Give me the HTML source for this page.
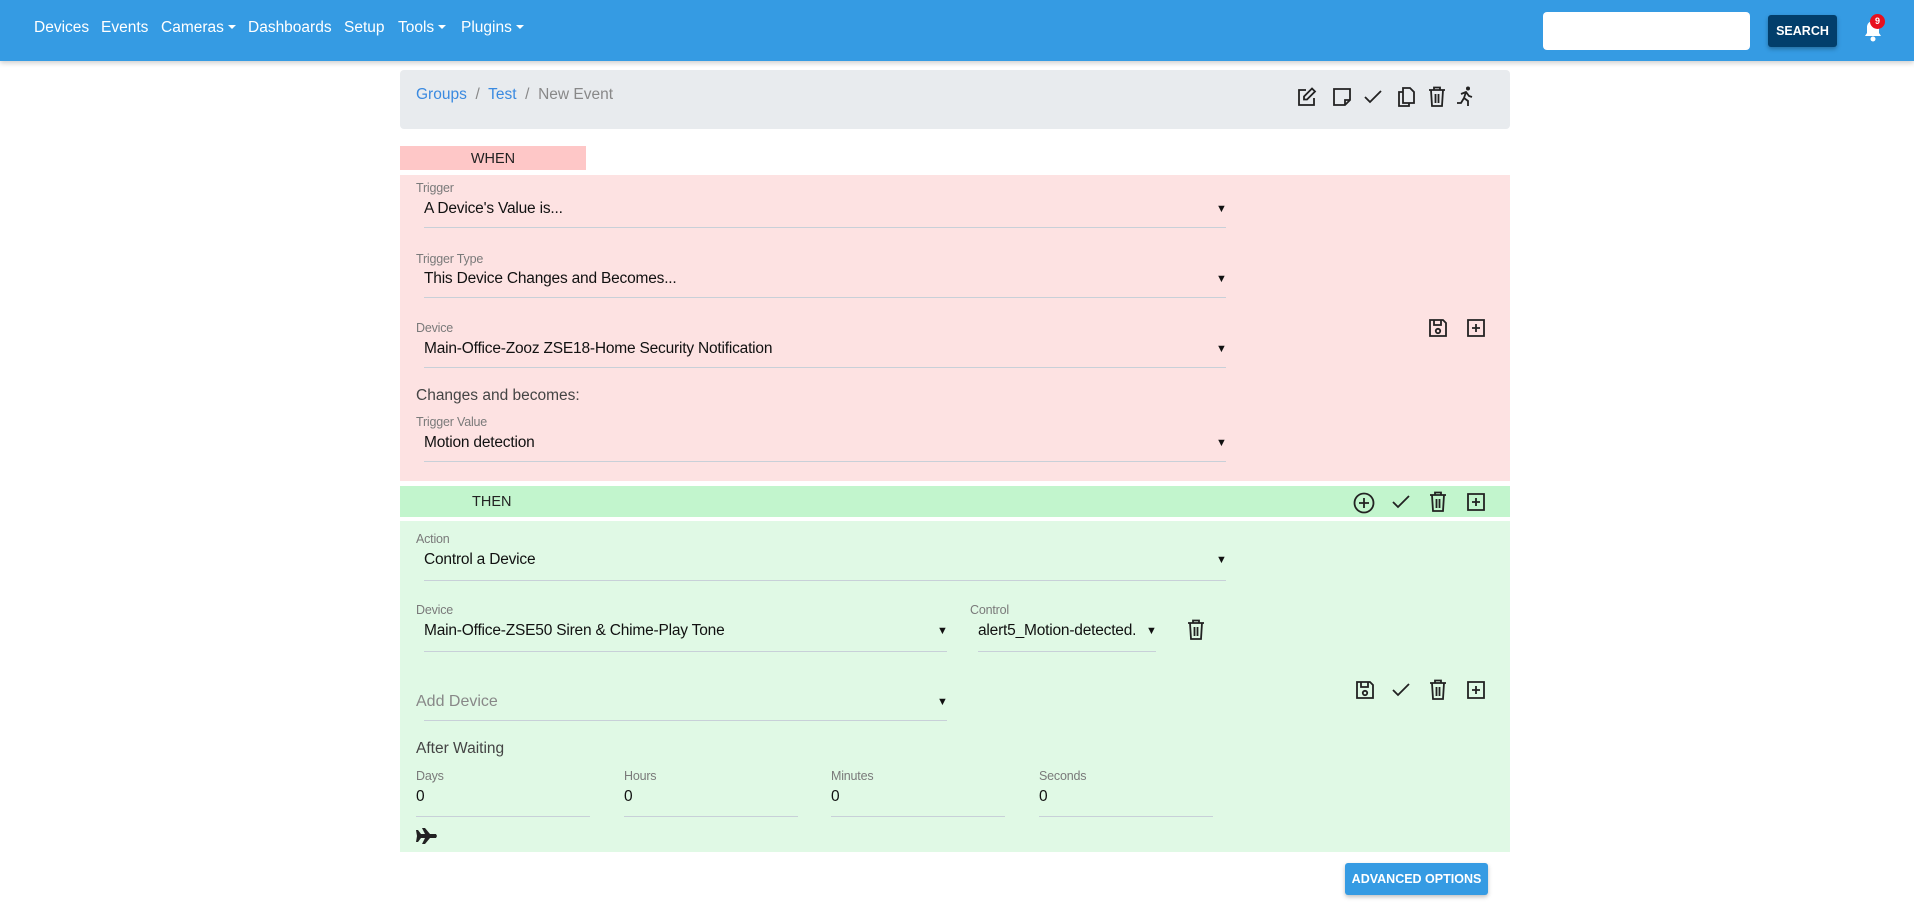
<!DOCTYPE html>
<html><head><meta charset="utf-8"><style>
*{box-sizing:border-box;margin:0;padding:0}
body{width:1914px;height:903px;overflow:hidden;background:#fff;font-family:"Liberation Sans",sans-serif;position:relative;color:#212529}
.a{position:absolute}
.nav{left:0;top:0;width:1914px;height:61px;background:#359be3;box-shadow:0 2px 5px rgba(0,0,0,.2)}
.ni{color:#fff;font-size:15.5px;top:19px}
.car{display:inline-block;border-left:4px solid transparent;border-right:4px solid transparent;border-top:4px solid #fff;vertical-align:3px;margin-left:4px}
.lbl{font-size:12.5px;color:#7a7a7a;letter-spacing:-.2px;margin-top:1px}
.val{font-size:15.5px;color:#111;letter-spacing:-.2px;margin-top:1px}
.ln{height:1px;background:#c8d0d8}
.arr{font-size:11px;color:#111}
svg{position:absolute;fill:none;stroke:#222;stroke-width:1.8}
</style></head><body>
<div class="a nav"></div>
<div class="a ni" style="left:34px">Devices</div>
<div class="a ni" style="left:101px">Events</div>
<div class="a ni" style="left:161px">Cameras<span class="car"></span></div>
<div class="a ni" style="left:248px">Dashboards</div>
<div class="a ni" style="left:344px">Setup</div>
<div class="a ni" style="left:398px">Tools<span class="car"></span></div>
<div class="a ni" style="left:461px">Plugins<span class="car"></span></div>
<div class="a" style="left:1543px;top:12px;width:207px;height:38px;background:#fff;border-radius:4px"></div>
<div class="a" style="left:1768px;top:15px;width:69px;height:32px;background:#023e6b;border-radius:3px;color:#fff;font-size:12.5px;font-weight:bold;text-align:center;line-height:32px;box-shadow:0 2px 4px rgba(0,0,0,.3)">SEARCH</div>
<svg style="left:1862px;top:17px" width="22" height="26" viewBox="0 0 22 26"><path d="M3 19h16l-2-3v-6a6 6 0 0 0-12 0v6z" fill="#fff" stroke="none"/><circle cx="11" cy="22" r="2.5" fill="#fff" stroke="none"/></svg>
<div class="a" style="left:1870px;top:14px;width:15px;height:15px;border-radius:50%;background:#e8101e;color:#fff;font-size:9px;font-weight:bold;text-align:center;line-height:15px">9</div>

<div class="a" style="left:400px;top:70px;width:1110px;height:59px;background:#e8ebee;border-radius:4px"></div>
<div class="a" style="left:416px;top:86px;font-size:15.5px;color:#888"><span style="color:#3a8ae0">Groups</span> &nbsp;/&nbsp; <span style="color:#3a8ae0">Test</span> &nbsp;/&nbsp; New Event</div>
<svg style="left:1297px;top:87px" width="20" height="20" viewBox="0 0 20 20"><path d="M9 3H2v15h15v-7"/><path d="M15 1.5l3 3-8 8H7v-3z"/></svg>
<svg style="left:1332px;top:87px" width="20" height="20" viewBox="0 0 20 20"><path d="M2 2h16v11l-5 5H2z"/><path d="M18 13h-5v5"/></svg>
<svg style="left:1363px;top:87px" width="20" height="20" viewBox="0 0 20 20"><path d="M2 10l5 5L18 4"/></svg>
<svg style="left:1396px;top:86px" width="20" height="22" viewBox="0 0 20 22"><path d="M7 2h7l4 4v11H7z"/><path d="M7 6H3v14h10v-3"/></svg>
<svg style="left:1427px;top:86px" width="20" height="22" viewBox="0 0 20 22"><path d="M2 4h16M7 4V1.5h6V4M4 4l1 16h10l1-16M8.5 8v9M11.5 8v9"/></svg>
<svg style="left:1456px;top:86px" width="20" height="22" viewBox="0 0 20 22"><circle cx="12" cy="2.5" r="2" fill="#222" stroke="none"/><path d="M5 8l5-2 3 4 3 1M10 6l-2 6 4 3v5M8 12l-3 5H1" /></svg>

<div class="a" style="left:400px;top:146px;width:186px;height:24px;background:#fec7c7;text-align:center;font-size:14.5px;line-height:26px;color:#222">WHEN</div>
<div class="a" style="left:400px;top:175px;width:1110px;height:306px;background:#fde2e2"></div>

<div class="a lbl" style="left:416px;top:180px">Trigger</div>
<div class="a val" style="left:424px;top:199px">A Device's Value is...</div>
<div class="a arr" style="left:1216px;top:203px">▼</div>
<div class="a ln" style="left:424px;top:227px;width:802px"></div>

<div class="a lbl" style="left:416px;top:251px">Trigger Type</div>
<div class="a val" style="left:424px;top:269px">This Device Changes and Becomes...</div>
<div class="a arr" style="left:1216px;top:273px">▼</div>
<div class="a ln" style="left:424px;top:297px;width:802px"></div>

<div class="a lbl" style="left:416px;top:320px">Device</div>
<div class="a val" style="left:424px;top:339px">Main-Office-Zooz ZSE18-Home Security Notification</div>
<div class="a arr" style="left:1216px;top:343px">▼</div>
<div class="a ln" style="left:424px;top:367px;width:802px"></div>

<div class="a" style="left:416px;top:387px;font-size:15.5px;color:#444">Changes and becomes:</div>
<div class="a lbl" style="left:416px;top:414px">Trigger Value</div>
<div class="a val" style="left:424px;top:433px">Motion detection</div>
<div class="a arr" style="left:1216px;top:437px">▼</div>
<div class="a ln" style="left:424px;top:461px;width:802px"></div>

<svg style="left:1428px;top:318px" width="20" height="20" viewBox="0 0 20 20"><path d="M2 2h13l3 3v13H2z"/><path d="M6 2v5h7V2"/><circle cx="10" cy="13" r="2.2"/></svg>
<svg style="left:1466px;top:318px" width="20" height="20" viewBox="0 0 20 20"><path d="M2 2h16v16H2zM10 6v8M6 10h8"/></svg>

<div class="a" style="left:400px;top:486px;width:1110px;height:31px;background:#c2f5cd"></div>
<div class="a" style="left:472px;top:494px;font-size:14.5px;color:#222">THEN</div>
<svg style="left:1353px;top:492px" width="22" height="22" viewBox="0 0 22 22"><circle cx="11" cy="11" r="9.5"/><path d="M11 6v10M6 11h10"/></svg>
<svg style="left:1391px;top:492px" width="20" height="20" viewBox="0 0 20 20"><path d="M2 10l5 5L18 4"/></svg>
<svg style="left:1428px;top:491px" width="20" height="22" viewBox="0 0 20 22"><path d="M2 4h16M7 4V1.5h6V4M4 4l1 16h10l1-16M8.5 8v9M11.5 8v9"/></svg>
<svg style="left:1466px;top:492px" width="20" height="20" viewBox="0 0 20 20"><path d="M2 2h16v16H2zM10 6v8M6 10h8"/></svg>

<div class="a" style="left:400px;top:521px;width:1110px;height:331px;background:#e0f9e5"></div>
<div class="a lbl" style="left:416px;top:531px">Action</div>
<div class="a val" style="left:424px;top:550px">Control a Device</div>
<div class="a arr" style="left:1216px;top:554px">▼</div>
<div class="a ln" style="left:424px;top:580px;width:802px"></div>

<div class="a lbl" style="left:416px;top:602px">Device</div>
<div class="a val" style="left:424px;top:621px">Main-Office-ZSE50 Siren &amp; Chime-Play Tone</div>
<div class="a arr" style="left:937px;top:625px">▼</div>
<div class="a ln" style="left:424px;top:651px;width:523px"></div>
<div class="a lbl" style="left:970px;top:602px">Control</div>
<div class="a val" style="left:978px;top:621px;width:178px;overflow:hidden;white-space:nowrap">alert5_Motion-detected.</div>
<div class="a arr" style="left:1146px;top:625px">▼</div>
<div class="a ln" style="left:978px;top:651px;width:178px"></div>
<svg style="left:1186px;top:619px" width="20" height="22" viewBox="0 0 20 22"><path d="M2 4h16M7 4V1.5h6V4M4 4l1 16h10l1-16M8.5 8v9M11.5 8v9"/></svg>

<div class="a" style="left:416px;top:693px;font-size:16px;color:#888">Add Device</div>
<div class="a arr" style="left:937px;top:696px">▼</div>
<div class="a ln" style="left:424px;top:720px;width:523px"></div>

<svg style="left:1355px;top:680px" width="20" height="20" viewBox="0 0 20 20"><path d="M2 2h13l3 3v13H2z"/><path d="M6 2v5h7V2"/><circle cx="10" cy="13" r="2.2"/></svg>
<svg style="left:1391px;top:680px" width="20" height="20" viewBox="0 0 20 20"><path d="M2 10l5 5L18 4"/></svg>
<svg style="left:1428px;top:679px" width="20" height="22" viewBox="0 0 20 22"><path d="M2 4h16M7 4V1.5h6V4M4 4l1 16h10l1-16M8.5 8v9M11.5 8v9"/></svg>
<svg style="left:1466px;top:680px" width="20" height="20" viewBox="0 0 20 20"><path d="M2 2h16v16H2zM10 6v8M6 10h8"/></svg>

<div class="a" style="left:416px;top:740px;font-size:15.5px;color:#444">After Waiting</div>
<div class="a lbl" style="left:416px;top:768px">Days</div>
<div class="a lbl" style="left:624px;top:768px">Hours</div>
<div class="a lbl" style="left:831px;top:768px">Minutes</div>
<div class="a lbl" style="left:1039px;top:768px">Seconds</div>
<div class="a val" style="left:416px;top:787px">0</div>
<div class="a val" style="left:624px;top:787px">0</div>
<div class="a val" style="left:831px;top:787px">0</div>
<div class="a val" style="left:1039px;top:787px">0</div>
<div class="a ln" style="left:416px;top:816px;width:174px"></div>
<div class="a ln" style="left:624px;top:816px;width:174px"></div>
<div class="a ln" style="left:831px;top:816px;width:174px"></div>
<div class="a ln" style="left:1039px;top:816px;width:174px"></div>
<svg style="left:415px;top:827px;stroke:none" width="22" height="18" viewBox="0 0 22 18"><path d="M1 3h2l3 4h4L7 1h3l5 6h6l1 2-1 2h-6l-5 6H7l3-6H6l-3 4H1l1-6z" fill="#222"/></svg>

<div class="a" style="left:1345px;top:863px;width:143px;height:32px;background:#359be3;border-radius:3px;color:#fff;font-size:12.5px;font-weight:bold;text-align:center;line-height:32px;box-shadow:0 2px 4px rgba(0,0,0,.25)">ADVANCED OPTIONS</div>
</body></html>
